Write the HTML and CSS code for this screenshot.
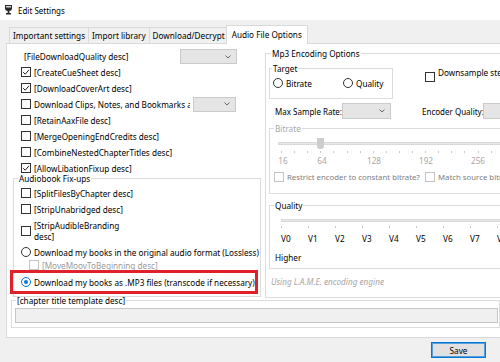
FILE: index.html
```html
<!DOCTYPE html>
<html>
<head>
<meta charset="utf-8">
<title>Edit Settings</title>
<link rel="stylesheet" href="styles.css">
</head>
<body>
<div class="window">
  <div class="titlebar">
    <svg class="app-icon" width="7" height="10" viewBox="0 0 7 10"><path d="M0 0h7v3.4c0 1.4-1.2 2.4-2.6 2.6V8H6v1.6H1V8h1.6V6C1.2 5.8 0 4.8 0 3.4z" fill="#2a2a2a"/><rect x="1" y="1.2" width="5" height="1.2" fill="#fff"/></svg>
    <span>Edit Settings</span>
  </div>

  <div class="tabs">
    <div class="tab">Important settings</div>
    <div class="tab">Import library</div>
    <div class="tab">Download/Decrypt</div>
    <div class="tab active">Audio File Options</div>
  </div>

  <div class="panel">
    <div class="columns">
      <div class="col-left">
        <div class="row-quality">
          <span>[FileDownloadQuality desc]</span>
          <div class="dd dd-quality"><svg class="chev" width="6" height="4" viewBox="0 0 6 4"><path d="M0.5 0.5L3 3L5.5 0.5" stroke="#666" fill="none"/></svg></div>
        </div>
        <div class="checks">
          <div class="check"><span class="cb"><svg width="8" height="8" viewBox="0 0 8 8"><path d="M1.2 4.2L3.2 6.2L7 1.8" stroke="#222" fill="none"/></svg></span><span>[CreateCueSheet desc]</span></div>
          <div class="check"><span class="cb"><svg width="8" height="8" viewBox="0 0 8 8"><path d="M1.2 4.2L3.2 6.2L7 1.8" stroke="#222" fill="none"/></svg></span><span>[DownloadCoverArt desc]</span></div>
          <div class="check with-dd"><span class="cb"></span><span class="clip">Download Clips, Notes, and Bookmarks as</span><div class="dd dd-clips"><svg class="chev" width="6" height="4" viewBox="0 0 6 4"><path d="M0.5 0.5L3 3L5.5 0.5" stroke="#666" fill="none"/></svg></div></div>
          <div class="check"><span class="cb"></span><span>[RetainAaxFile desc]</span></div>
          <div class="check"><span class="cb"></span><span>[MergeOpeningEndCredits desc]</span></div>
          <div class="check"><span class="cb"></span><span>[CombineNestedChapterTitles desc]</span></div>
          <div class="check"><span class="cb"><svg width="8" height="8" viewBox="0 0 8 8"><path d="M1.2 4.2L3.2 6.2L7 1.8" stroke="#222" fill="none"/></svg></span><span>[AllowLibationFixup desc]</span></div>
        </div>

        <fieldset class="group fixups">
          <legend>Audiobook Fix-ups</legend>
          <div class="fix-list">
            <div class="check"><span class="cb"></span><span>[SplitFilesByChapter desc]</span></div>
            <div class="check"><span class="cb"></span><span>[StripUnabridged desc]</span></div>
            <div class="check two-line"><span class="cb"></span><span>[StripAudibleBranding<br>desc]</span></div>
            <div class="check row-lossless"><span class="rb"></span><span>Download my books in the original audio format (Lossless)</span></div>
            <div class="check row-moov disabled"><span class="cb"></span><span>[MoveMoovToBeginning desc]</span></div>
            <div class="check row-mp3 highlighted"><span class="rb on"></span><span>Download my books as .MP3 files (transcode if necessary)</span></div>
          </div>
        </fieldset>
      </div>

      <fieldset class="group mp3">
        <legend>Mp3 Encoding Options</legend>
        <div class="mp3-body">
          <div class="row-target">
            <fieldset class="group target">
              <legend>Target</legend>
              <div class="radios">
                <div class="radio-item item-bitrate"><span class="rb"></span><span>Bitrate</span></div>
                <div class="radio-item"><span class="rb"></span><span>Quality</span></div>
              </div>
            </fieldset>
            <div class="downsample"><span class="cb"></span><span>Downsample stereo to mono?</span></div>
          </div>

          <div class="row-rates">
            <span class="lbl lbl-max">Max Sample Rate:</span>
            <div class="dd dd-rate"><svg class="chev" width="6" height="4" viewBox="0 0 6 4"><path d="M0.5 0.5L3 3L5.5 0.5" stroke="#666" fill="none"/></svg></div>
            <span class="lbl lbl-enc">Encoder Quality:</span>
            <div class="dd dd-enc"></div>
          </div>

          <fieldset class="group bitrate disabled">
            <legend>Bitrate</legend>
            <div class="bitrate-body">
              <div class="slider"><div class="track"></div><div class="thumb"></div></div>
              <div class="ticks"></div>
              <div class="scale">
                <span>16</span><span class="s64">64</span><span class="s52">128</span><span class="s52">192</span><span class="s52">256</span><span class="s52">320</span>
              </div>
              <div class="bitrate-checks">
                <div class="check item-restrict"><span class="cb"></span><span>Restrict encoder to constant bitrate?</span></div>
                <div class="check"><span class="cb"></span><span>Match source bitrate?</span></div>
              </div>
            </div>
          </fieldset>

          <fieldset class="group quality">
            <legend>Quality</legend>
            <div class="quality-body">
              <div class="track qtrack"></div>
              <div class="ticks qticks"></div>
              <div class="vscale">
                <span>V0</span><span>V1</span><span>V2</span><span>V3</span><span>V4</span><span>V5</span><span>V6</span><span>V7</span><span>V8</span><span>V9</span>
              </div>
              <div class="higher">Higher</div>
            </div>
          </fieldset>

          <div class="note">Using L.A.M.E. encoding engine</div>
        </div>
      </fieldset>
    </div>

    <fieldset class="group chapter">
      <legend>[chapter title template desc]</legend>
      <div class="textbox"></div>
    </fieldset>
  </div>

  <div class="footer">
    <button class="save">Save</button>
  </div>
</div>
</body>
</html>
```

FILE: styles.css
```css
* { box-sizing: border-box; }
html, body { margin: 0; padding: 0; }
body {
  width: 500px;
  height: 362px;
  overflow: hidden;
  background: #f0f0f0;
  font-family: "Noto Sans", "Open Sans", sans-serif;
  font-size: 8.2px;
  color: #000;
}
.window { width: 580px; }

/* title bar */
.titlebar {
  height: 20px;
  background: #fff;
  display: flex;
  align-items: center;
  padding-left: 5px;
  gap: 6px;
  font-size: 8px;
}
.app-icon { display: block; }

/* tabs */
.tabs {
  display: flex;
  align-items: flex-end;
  height: 23px;
  padding-left: 9px;
}
.tab {
  height: 16px;
  line-height: 15px;
  padding: 0 3px;
  border: 1px solid #d9d9d9;
  border-bottom: none;
  margin-left: -1px;
  background: #f0f0f0;
  white-space: nowrap;
}
.tab:first-child { margin-left: 0; }
.tab.active {
  height: 19px;
  line-height: 17px;
  padding: 0 5px;
  margin: 0 -2px -1px -3px;
  background: #fff;
  position: relative;
  z-index: 1;
}

/* panel */
.panel {
  margin-left: 6px;
  width: 570px;
  height: 295px;
  background: #fff;
  border: 1px solid #d9d9d9;
}
.columns {
  display: grid;
  grid-template-columns: 256px 1fr;
  align-items: start;
}

/* generic controls */
.group {
  margin: 0;
  padding: 0;
  border: 1px solid #dcdcdc;
  min-width: 0;
}
.group > legend {
  padding: 0 1px;
  height: 11px;
  line-height: 11px;
  white-space: nowrap;
}
.cb {
  flex: none;
  width: 10px;
  height: 10px;
  border: 1px solid #333;
  background: #fff;
  display: flex;
  align-items: center;
  justify-content: center;
}
.cb svg { display: block; }
.rb {
  flex: none;
  width: 10px;
  height: 10px;
  border: 1px solid #333;
  border-radius: 50%;
  background: #fff;
  display: flex;
  align-items: center;
  justify-content: center;
}
.rb.on { border-color: #0078d7; }
.rb.on::after {
  content: "";
  width: 4px;
  height: 4px;
  border-radius: 50%;
  background: #0078d7;
}
.dd {
  flex: none;
  background: #e5e5e5;
  border: 1px solid #cacaca;
  display: flex;
  align-items: center;
  justify-content: flex-end;
  padding-right: 5px;
}
.chev { display: block; }
.check {
  height: 16px;
  display: flex;
  align-items: center;
  gap: 3px;
  white-space: nowrap;
}

/* left column */
.col-left { display: flex; flex-direction: column; }
.row-quality {
  margin-top: 5px;
  height: 15px;
  width: 230px;
  padding-left: 17px;
  display: flex;
  align-items: center;
}
.dd-quality { margin-left: auto; width: 57px; height: 15px; }
.checks { padding-left: 14px; }
.check.with-dd { width: 215px; }
.clip { flex: 1; min-width: 0; overflow: hidden; }
.dd-clips { width: 43px; height: 15px; }

.fixups {
  margin-top: -3px;
  margin-left: 6px;
  width: 248px;
}
.fixups > legend { margin-left: 4px; }
.fix-list { padding: 1px 0 5px 7px; }
.check.two-line { height: 28px; line-height: 11px; }
.row-lossless { height: 14px; }
.row-moov { height: 14px; padding: 0 0 2px 8px; }
.disabled .cb { border-color: #c4c4c4; }
.row-moov span:last-child { color: #9a9a9a; }
.row-mp3 { height: 18px; position: relative; }
.highlighted::after {
  content: "";
  position: absolute;
  left: -11px;
  right: 2px;
  top: -3px;
  bottom: -3px;
  border: 3px solid #e0202a;
}

/* right column */
.mp3 {
  margin-top: 4px;
  margin-left: 2px;
  width: 310px;
}
.mp3 > legend { margin-left: 5px; }
.mp3-body { padding: 0 0 9px 3px; }
.row-target { display: flex; align-items: flex-start; }
.target { margin-top: 4px; width: 124px; flex: none; }
.target > legend { margin-left: 2px; }
.radios {
  height: 18px;
  padding: 0 0 0 3px;
  margin-bottom: 6px;
  display: flex;
  align-items: center;
}
.radio-item { display: flex; align-items: center; gap: 3px; }
.item-bitrate { width: 70px; }
.downsample {
  margin: 8px 0 0 32px;
  display: flex;
  align-items: flex-start;
  gap: 3px;
  line-height: 12px;
  white-space: nowrap;
}
.downsample .cb { margin-top: 5px; }

.row-rates {
  margin-top: 4px;
  height: 16px;
  padding-left: 6px;
  display: flex;
  align-items: center;
  white-space: nowrap;
  font-size: 8px;
}
.lbl { flex: none; }
.lbl-max { width: 67px; }
.dd-rate { width: 49px; height: 16px; }
.lbl-enc { width: 61px; margin-left: 31px; }
.dd-enc { width: 60px; height: 16px; }

.bitrate { margin-top: 4px; width: 300px; }
.bitrate > legend { margin-left: 4px; color: #a8a8a8; }
.bitrate-body { padding: 0 0 9px 4px; }
.slider {
  position: relative;
  margin: 3px 0 0 4px;
  height: 14px;
  padding-top: 5px;
}
.track {
  height: 3px;
  background: #e7e7e7;
  border: 1px solid #dadada;
}
.thumb {
  position: absolute;
  left: 39px;
  top: 1px;
  width: 7px;
  height: 11px;
  background: #cdcdcd;
  border-radius: 0 0 3px 3px;
}
.ticks {
  height: 2px;
  margin-left: 7px;
  background: repeating-linear-gradient(to right, #c8c8c8 0 1px, transparent 1px 13.1px);
}
.scale {
  margin-top: 2px;
  height: 11px;
  line-height: 11px;
  padding-left: 9px;
  display: flex;
  color: #a8a8a8;
}
.scale span {
  width: 0;
  display: flex;
  justify-content: center;
  white-space: nowrap;
}
.scale .s64 { margin-left: 39px; }
.scale .s52 { margin-left: 52px; }
.bitrate-checks {
  margin-top: 4px;
  height: 14px;
  display: flex;
  align-items: center;
  color: #7e7e7e;
  font-size: 7.8px;
}
.bitrate-checks .check { height: 14px; }
.bitrate-checks .cb { border-color: #c4c4c4; }
.item-restrict { width: 151px; }

.quality { margin-top: 6px; width: 300px; }
.quality > legend { margin-left: 4px; }
.quality-body { padding: 0 0 5px 4px; }
.qtrack { margin: 8px 0 0 7px; }
.qticks { margin-top: 4px; background: repeating-linear-gradient(to right, #c8c8c8 0 1px, transparent 1px 27px); }
.vscale {
  margin: 5px 0 0 7px;
  height: 11px;
  line-height: 11px;
  display: flex;
}
.vscale span { width: 27px; flex: none; }
.higher {
  margin: 8px 0 0 1px;
  height: 11px;
  line-height: 11px;
}
.note {
  margin: 7px 0 0 2px;
  line-height: 12px;
  font-style: italic;
  color: #a6a6a6;
}

/* chapter template */
.chapter {
  margin-top: -3px;
  margin-left: 4px;
  width: 489px;
  padding: 0 1px 4px 3px;
}
.chapter > legend { margin-left: 1px; }
.textbox {
  margin-top: 2px;
  height: 15px;
  background: #f0f0f0;
  border: 1px solid #c6c6c6;
}

/* footer */
.footer { padding: 4px 0 0 431px; }
.save {
  display: block;
  width: 55px;
  height: 16px;
  padding: 0;
  font: inherit;
  background: #e1e1e1;
  border: 1px solid #0078d7;
  box-shadow: inset 0 0 0 1px #5a9fdc;
  color: #000;
}
```
